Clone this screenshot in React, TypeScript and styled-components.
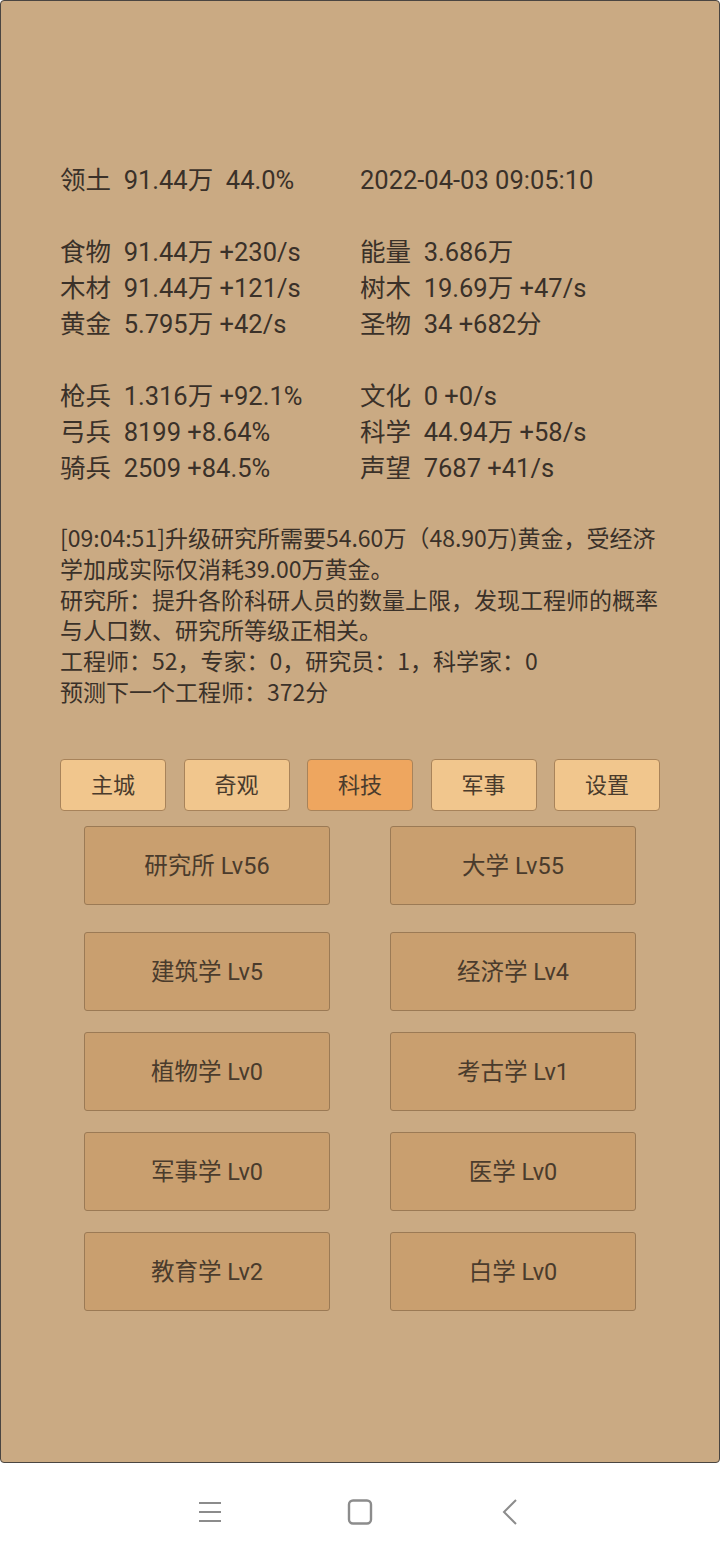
import styled, { createGlobalStyle } from "styled-components";

const GlobalStyle = createGlobalStyle`
  html, body {
    margin: 0;
    padding: 0;
    background: #ffffff;
  }
  * {
    box-sizing: border-box;
  }
`;

const statGroups: [string, string][][] = [
  [["领土  91.44万  44.0%", "2022-04-03 09:05:10"]],
  [
    ["食物  91.44万 +230/s", "能量  3.686万"],
    ["木材  91.44万 +121/s", "树木  19.69万 +47/s"],
    ["黄金  5.795万 +42/s", "圣物  34 +682分"],
  ],
  [
    ["枪兵  1.316万 +92.1%", "文化  0 +0/s"],
    ["弓兵  8199 +8.64%", "科学  44.94万 +58/s"],
    ["骑兵  2509 +84.5%", "声望  7687 +41/s"],
  ],
];

// wrapped the same way the game log wraps on the device
const logLines = [
  "[09:04:51]升级研究所需要54.60万（48.90万)黄金，受经济",
  "学加成实际仅消耗39.00万黄金。",
  "研究所：提升各阶科研人员的数量上限，发现工程师的概率",
  "与人口数、研究所等级正相关。",
  "工程师：52，专家：0，研究员：1，科学家：0",
  "预测下一个工程师：372分",
];

const tabs = ["主城", "奇观", "科技", "军事", "设置"];

const buildings = ["研究所 Lv56", "大学 Lv55"];
const sciences = [
  "建筑学 Lv5",
  "经济学 Lv4",
  "植物学 Lv0",
  "考古学 Lv1",
  "军事学 Lv0",
  "医学 Lv0",
  "教育学 Lv2",
  "白学 Lv0",
];

const App = () => {
  return (
    <>
      <GlobalStyle />
      <Screen>
        <Stats>
          {statGroups.map((group, gi) => (
            <StatGroup key={gi}>
              {group.map(([left, right], ri) => (
                <StatRow key={ri}>
                  <StatCell>{left}</StatCell>
                  <StatCell>{right}</StatCell>
                </StatRow>
              ))}
            </StatGroup>
          ))}
        </Stats>

        <Log>
          {logLines.map((line, i) => (
            <LogLine key={i}>{line}</LogLine>
          ))}
        </Log>

        <Tabs>
          {tabs.map((t) => (
            <Tab key={t} active={t === "科技"}>
              {t}
            </Tab>
          ))}
        </Tabs>

        <ItemGrid first>
          {buildings.map((b) => (
            <ItemButton key={b}>{b}</ItemButton>
          ))}
        </ItemGrid>
        <ItemGrid>
          {sciences.map((s) => (
            <ItemButton key={s}>{s}</ItemButton>
          ))}
        </ItemGrid>
      </Screen>

      <NavBar>
        <NavItem>
          <svg width="24" height="24" viewBox="0 0 24 24">
            <path
              d="M1 3h22M1 12h22M1 21h22"
              stroke="#8c8c8c"
              strokeWidth="2"
              fill="none"
            />
          </svg>
        </NavItem>
        <NavItem>
          <svg width="26" height="26" viewBox="0 0 26 26">
            <rect
              x="2"
              y="1.5"
              width="22"
              height="23"
              rx="4"
              stroke="#8c8c8c"
              strokeWidth="2.4"
              fill="none"
            />
          </svg>
        </NavItem>
        <NavItem>
          <svg width="18" height="26" viewBox="0 0 18 26">
            <path
              d="M15 1L3 13l12 12"
              stroke="#8c8c8c"
              strokeWidth="2"
              fill="none"
            />
          </svg>
        </NavItem>
      </NavBar>
    </>
  );
};

const Screen = styled.div`
  height: 1463px;
  background: #caaa83;
  border: 1px solid #4a4541;
  border-radius: 4px;
  padding: 161px 59px 0;
  color: #3a3129;
`;

const Stats = styled.div`
  font-family: Roboto, "Noto Sans CJK SC", sans-serif;
  font-size: 25.5px;
  line-height: 36px;
`;

const StatGroup = styled.div`
  margin-bottom: 36px;
`;

const StatRow = styled.div`
  display: grid;
  grid-template-columns: 300px 300px;
`;

const StatCell = styled.div`
  white-space: pre;
`;

const Log = styled.div`
  font-family: "Noto Sans CJK SC", sans-serif;
  font-size: 23px;
  line-height: 30.8px;
`;

const LogLine = styled.div`
  white-space: nowrap;
`;

const Tabs = styled.div`
  display: flex;
  justify-content: space-between;
  width: 600px;
  margin-top: 52px;
`;

const Tab = styled.div<{ active?: boolean }>`
  width: 106px;
  height: 52px;
  display: flex;
  align-items: center;
  justify-content: center;
  padding-bottom: 3px;
  background: ${({ active }) => (active ? "#eea65f" : "#f1c68d")};
  border: 1px solid #a8835a;
  border-radius: 4px;
  font-family: "Noto Sans CJK SC", sans-serif;
  font-size: 22px;
  color: #4a3b2c;
`;

const ItemGrid = styled.div<{ first?: boolean }>`
  display: grid;
  grid-template-columns: 246px 246px;
  column-gap: 60px;
  row-gap: 21px;
  margin-top: ${({ first }) => (first ? "15px" : "27px")};
  margin-left: 24px;
`;

const ItemButton = styled.div`
  height: 79px;
  display: flex;
  align-items: center;
  justify-content: center;
  padding-bottom: 2px;
  background: #c99f6f;
  border: 1px solid #9b7a55;
  border-radius: 3px;
  font-family: Roboto, "Noto Sans CJK SC", sans-serif;
  font-size: 23.5px;
  color: #4a3b2c;
`;

const NavBar = styled.div`
  height: 97px;
  display: grid;
  grid-template-columns: repeat(3, 150px);
  justify-content: center;
  align-items: center;
  background: #ffffff;
`;

const NavItem = styled.div`
  display: flex;
  align-items: center;
  justify-content: center;
`;

export default App;
